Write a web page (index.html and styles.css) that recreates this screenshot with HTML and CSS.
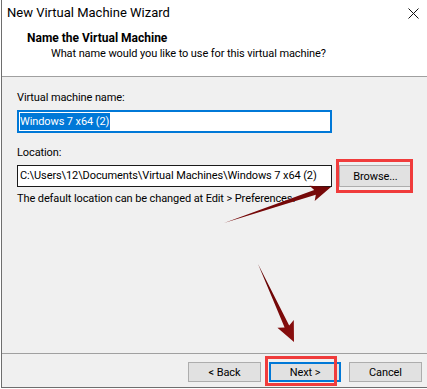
FILE: index.html
```html
<!DOCTYPE html>
<html lang="en">
<head>
  <meta charset="UTF-8" />
  <title>New Virtual Machine Wizard</title>
  <link rel="stylesheet" href="styles.css">
</head>
<body>
  <div class="window">
    <div class="header">
      <div class="titlebar">
        <span class="title">New Virtual Machine Wizard</span>
        <svg class="close" width="11" height="11" viewBox="0 0 11 11">
          <path d="M0.5 0.5 L10.5 10.5 M10.5 0.5 L0.5 10.5" stroke="#111" stroke-width="1" fill="none"/>
        </svg>
      </div>
      <div class="heading">Name the Virtual Machine</div>
      <div class="subtitle">What name would you like to use for this virtual machine?</div>
    </div>

    <div class="content">
      <div class="label label-first">Virtual machine name:</div>
      <div class="field field-focus"><span class="selected">Windows 7 x64 (2)</span></div>

      <div class="label">Location:</div>
      <div class="location-row">
        <div class="field field-location">C:\Users\12\Documents\Virtual Machines\Windows 7 x64 (2)</div>
        <button class="btn btn-browse">Browse...</button>
      </div>
      <div class="hint">The default location can be changed at Edit &gt; Preferences.</div>
    </div>

    <div class="footer">
      <button class="btn">&lt; Back</button>
      <button class="btn btn-default">Next &gt;</button>
      <button class="btn">Cancel</button>
    </div>

    <!-- annotations drawn over the dialog -->
    <div class="mark mark-browse"></div>
    <div class="mark mark-next"></div>
    <svg class="arrows" width="427" height="389" viewBox="0 0 427 389">
      <defs>
        <linearGradient id="arrowFill" x1="0" y1="0" x2="1" y2="1">
          <stop offset="0" stop-color="#5e0000"/>
          <stop offset="1" stop-color="#8c1010"/>
        </linearGradient>
      </defs>
      <polygon fill="url(#arrowFill)" points="224,223 314.2,190 309.5,185.8 331,187 314.7,201 315.8,194.8"/>
      <polygon fill="url(#arrowFill)" points="258,264 289.2,325.6 293.8,320.1 294,342 277.4,327.7 284.6,327.6"/>
    </svg>
  </div>
</body>
</html>
```

FILE: styles.css
```css
body {
  margin: 0;
  background: #ffffff;
  font-family: Roboto, "Liberation Sans", sans-serif;
  font-size: 11px;
  letter-spacing: -0.1px;
  color: #000;
}
.window {
  position: relative;
  margin-left: 1px;
  height: 388px;
  box-sizing: border-box;
  border-left: 1px solid #6e6e6e;
  border-bottom: 1px solid #6e6e6e;
  background: #f0f0f0;
  display: flex;
  flex-direction: column;
}
.header {
  height: 76px;
  background: #fff;
  border-bottom: 1px solid #a0a0a0;
}
.titlebar {
  display: flex;
  justify-content: space-between;
  align-items: center;
  height: 25px;
  line-height: 25px;
  padding-left: 5px;
  padding-right: 8px;
  font-size: 13px;
  letter-spacing: 0;
}
.close {
  margin-top: 1px;
}
.heading {
  margin-top: 6px;
  padding-left: 25px;
  font-size: 12px;
  font-weight: 700;
  letter-spacing: 0;
  line-height: 15px;
}
.subtitle {
  padding-left: 49px;
  line-height: 16px;
}
.content {
  flex: 1;
  padding-left: 15px;
}
.label {
  line-height: 16px;
  margin-top: 12px;
}
.label-first {
  margin-top: 13px;
}
.field {
  box-sizing: border-box;
  margin-top: 4px;
  width: 315px;
  height: 23px;
  line-height: 19px;
  padding-left: 2px;
  background: #fff;
  white-space: nowrap;
  overflow: hidden;
}
.field-focus {
  border: 2px solid #0078d7;
  padding-left: 1px;
}
.selected {
  display: inline-block;
  background: #0078d7;
  color: #fff;
  line-height: 17px;
  padding-right: 1px;
}
.location-row {
  display: flex;
  gap: 7px;
  margin-top: 4px;
}
.field-location {
  margin-top: 0;
  height: 22px;
  line-height: 20px;
  border: 1px solid #1a1a1a;
}
.hint {
  margin-top: 4px;
  line-height: 16px;
}
.btn {
  box-sizing: border-box;
  width: 73px;
  height: 20px;
  padding: 0;
  background: #e1e1e1;
  border: 1px solid #adadad;
  font-family: Roboto, "Liberation Sans", sans-serif;
  font-size: 11px;
  letter-spacing: -0.1px;
  color: #000;
}
.btn-browse {
  width: 73px;
  height: 22px;
}
.btn-default {
  width: 72px;
  border: 2px solid #0078d7;
}
.footer {
  height: 34px;
  box-sizing: border-box;
  border-top: 1px solid #a0a0a0;
  padding: 8px 5px 0 0;
  display: flex;
  justify-content: flex-end;
  gap: 8px;
}
.mark {
  position: absolute;
  box-sizing: border-box;
  border: 3px solid #f03c3c;
}
.mark-browse {
  left: 334px;
  top: 159px;
  width: 77px;
  height: 34px;
}
.mark-next {
  left: 263px;
  top: 356px;
  width: 72px;
  height: 30px;
}
.arrows {
  position: absolute;
  left: -2px;
  top: 0;
  pointer-events: none;
}
```
